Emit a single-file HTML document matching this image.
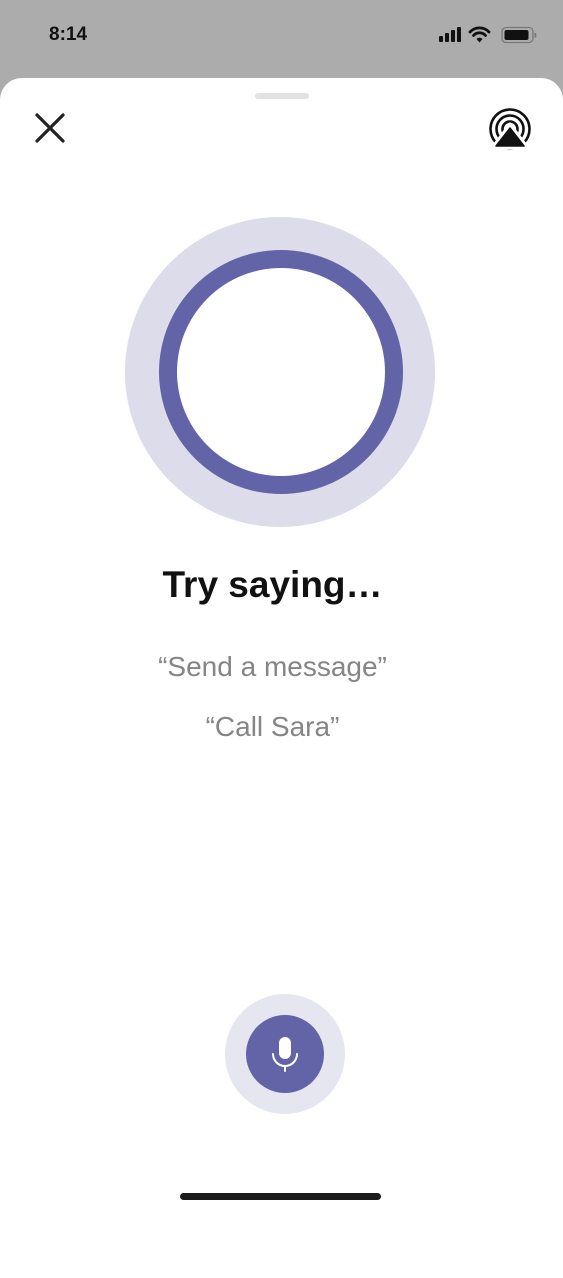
<!DOCTYPE html>
<html><head><meta charset="utf-8"><style>
body{margin:0;width:563px;height:1219px;background:#acacac;font-family:"Liberation Sans",sans-serif;position:relative;overflow:hidden}
.sheet{position:absolute;left:0;top:78px;width:563px;height:1200px;background:#fff;border-radius:22px 22px 0 0}
.abs{position:absolute}
.t{position:absolute;left:0;width:545px;text-align:center}
</style></head><body>
<div class="abs" style="left:49px;top:24px;font-size:19px;font-weight:bold;color:#111">8:14</div>
<svg class="abs" style="left:436px;top:25px" width="105" height="20">
<rect x="3" y="11" width="4" height="6" rx="1" fill="#111"/><rect x="9" y="8" width="4" height="9" rx="1" fill="#111"/><rect x="15" y="5" width="4" height="12" rx="1" fill="#111"/><rect x="21" y="2" width="4" height="15" rx="1" fill="#111"/>
<path d="M34 7a13 13 0 0 1 19 0M37.5 10.5a8 8 0 0 1 12 0" stroke="#111" stroke-width="2.8" fill="none" stroke-linecap="round"/><path d="M40.5 14l3 3.5 3-3.5a4 4 0 0 0-6 0z" fill="#111"/>
<rect x="66" y="2.5" width="31" height="15" rx="4" fill="none" stroke="#777" stroke-width="1.3"/><rect x="68.5" y="5" width="24" height="10" rx="2" fill="#111"/><rect x="98.5" y="8" width="1.8" height="4.5" fill="#777"/>
</svg>
<div class="sheet"></div>
<div class="abs" style="left:255px;top:93px;width:54px;height:6px;border-radius:3px;background:#e2e2e2"></div>
<svg class="abs" style="left:34px;top:112px" width="36" height="36"><path d="M3 3L29 29M29 3L3 29" stroke="#222" stroke-width="3.2" stroke-linecap="round"/></svg>
<svg class="abs" style="left:486px;top:107px" width="48" height="46">
<circle cx="24" cy="22" r="19.5" fill="none" stroke="#111" stroke-width="2.6"/>
<circle cx="24" cy="22" r="13.5" fill="none" stroke="#111" stroke-width="2.6"/>
<circle cx="24" cy="22" r="7.5" fill="none" stroke="#111" stroke-width="2.6"/>
<path d="M24 17L6 41L42 41Z" fill="#fff" stroke="#fff" stroke-width="3" stroke-linejoin="round"/>
<path d="M24 21L10 39L38 39Z" fill="#111" stroke="#111" stroke-width="1.5" stroke-linejoin="round"/>
</svg>
<div class="abs" style="left:125px;top:217px;width:310px;height:310px;border-radius:50%;background:#dcdcea"></div>
<div class="abs" style="left:159px;top:250px;width:244px;height:244px;border-radius:50%;background:#6264a7"></div>
<div class="abs" style="left:177px;top:268px;width:208px;height:208px;border-radius:50%;background:#fff"></div>
<div class="t" style="top:564px;font-size:37px;font-weight:bold;color:#111">Try saying…</div>
<div class="t" style="top:651px;font-size:28px;color:#858585">“Send a message”</div>
<div class="t" style="top:711px;font-size:28px;color:#858585">“Call Sara”</div>
<div class="abs" style="left:225px;top:994px;width:120px;height:120px;border-radius:50%;background:#e6e6f0"></div>
<div class="abs" style="left:246px;top:1015px;width:78px;height:78px;border-radius:50%;background:#6264a7"></div>
<svg class="abs" style="left:265px;top:1035px" width="40" height="40">
<rect x="14" y="2" width="12" height="22" rx="6" fill="#fff"/>
<path d="M8 19a12 12 0 0 0 24 0M20 31v5" stroke="#fff" stroke-width="2" fill="none" stroke-linecap="round"/>
</svg>
<div class="abs" style="left:180px;top:1193px;width:201px;height:7px;border-radius:4px;background:#1c1c1c"></div>
</body></html>
